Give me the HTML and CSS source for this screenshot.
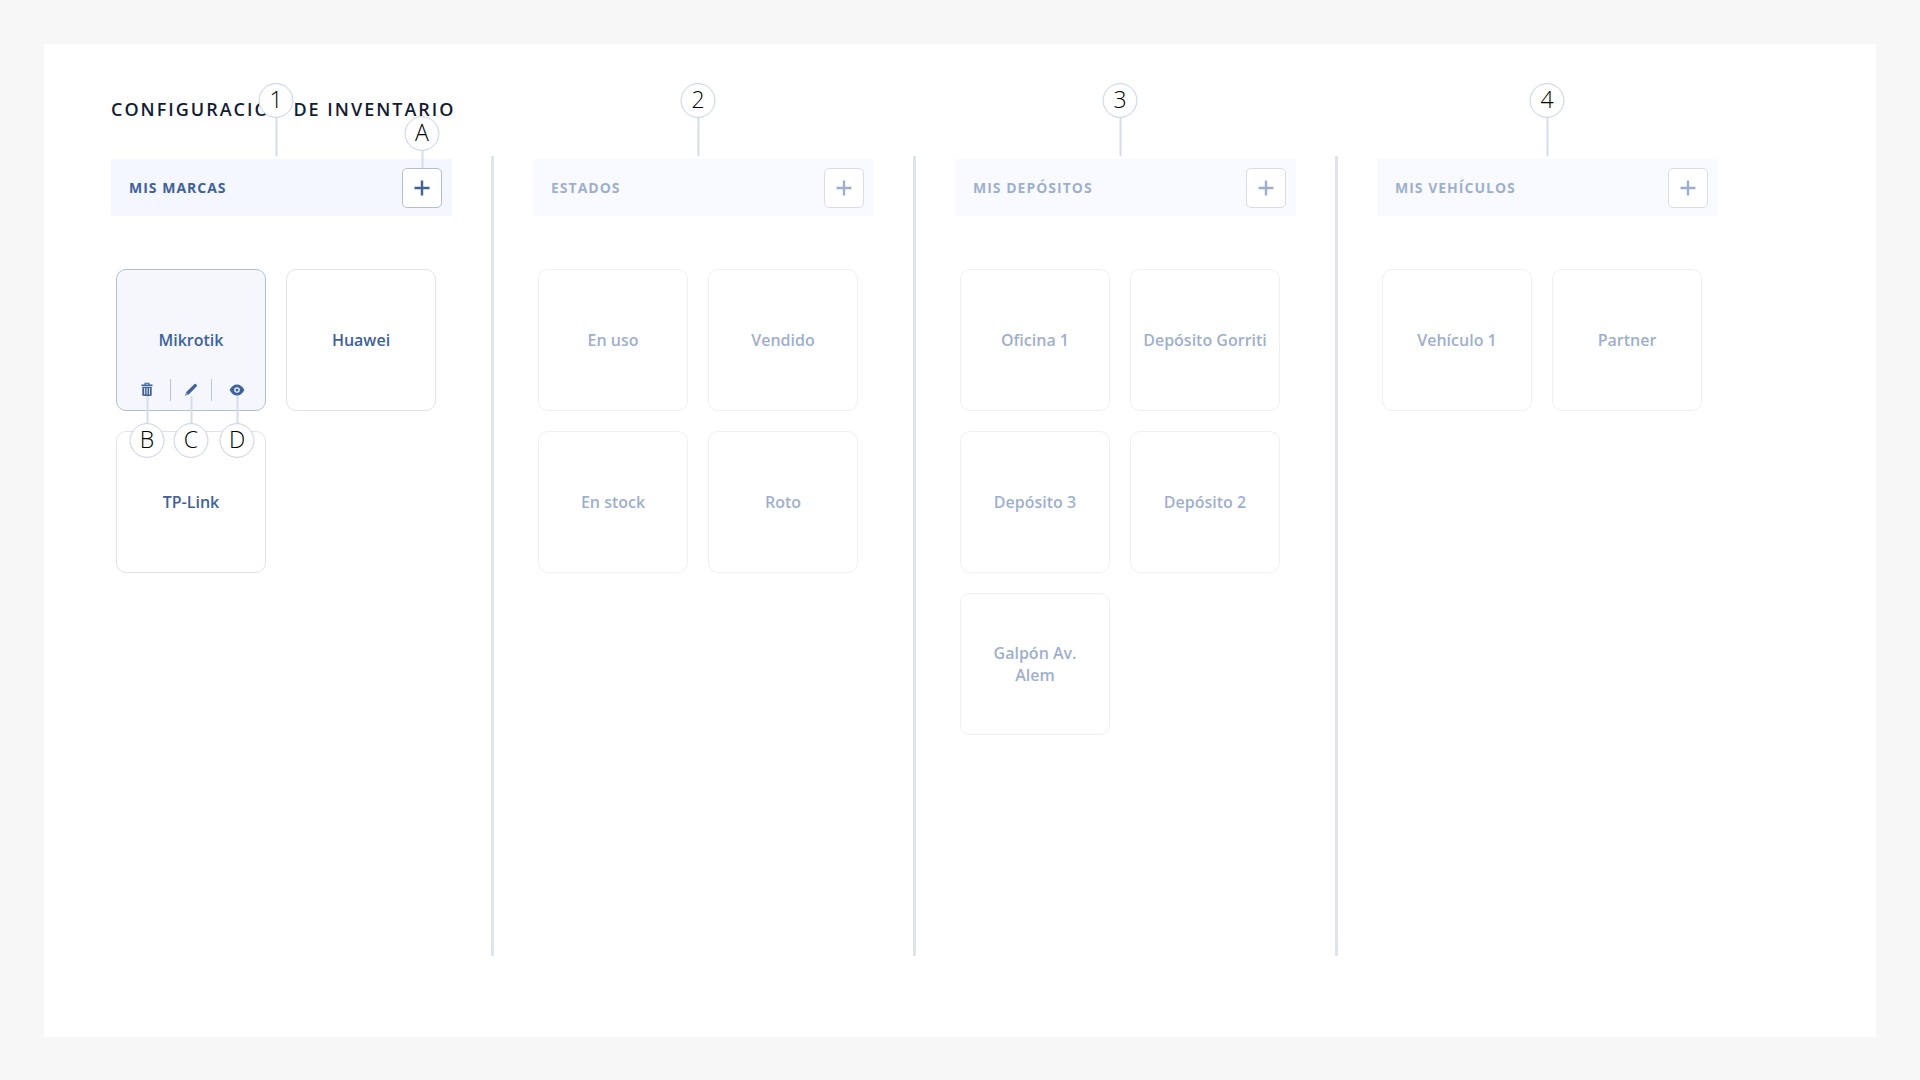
FILE: index.html
```html
<!DOCTYPE html>
<html lang="es">
<head>
    <meta charset="UTF-8">
    <meta name="viewport" content="width=device-width, initial-scale=1.0">
    <title>Configuración de inventario</title>
    <link rel="stylesheet" href="styles.css">
</head>
<body>
    <main class="panel">
        <h1>CONFIGURACIÓN DE INVENTARIO</h1>
        <div class="columns">
            <section class="column active">
                <span class="pin pin-column">1</span>
                <header class="column-header">
                    <h2>MIS MARCAS</h2>
                    <button class="add-btn">
                        <svg viewBox="0 0 16 16"><path d="M8 0.5v15M0.5 8h15"/></svg>
                        <span class="pin pin-add">A</span>
                    </button>
                </header>
                <div class="cards">
                    <div class="card selected">
                        <span class="card-name">Mikrotik</span>
                        <div class="actions">
                            <button>
                                <svg viewBox="0 0 16 16">
                                    <path d="M2.5 2.5h11v1.8h-11zM5.5 2.5V.8h5v1.7H9.3v-.7H6.7v.7z"/>
                                    <path fill-rule="evenodd" d="M3.3 4.9h9.4v7.8q0 1.3-1.3 1.3H4.6q-1.3 0-1.3-1.3zM5.2 6.1v6.3h.9V6.1zM7.6 6.1v6.3h.9V6.1zM10 6.1v6.3h.9V6.1z"/>
                                </svg>
                                <span class="pin pin-action">B</span>
                            </button>
                            <button>
                                <svg viewBox="0 0 16 16">
                                    <path fill-rule="evenodd" d="M11.3 2.2q1-.9 2.1.2 1.1 1.1.2 2.1L6 12.2 1.9 13.8l1.6-4.1zM3.8 11.1l-.7 1.6 1.6-.7z"/>
                                </svg>
                                <span class="pin pin-action">C</span>
                            </button>
                            <button>
                                <svg viewBox="0 0 16 16">
                                    <path fill-rule="evenodd" d="M.6 8Q3.5 2.5 8 2.5T15.4 8Q12.5 13.5 8 13.5T.6 8zM8 5.2a2.8 2.8 0 1 0 0 5.6 2.8 2.8 0 0 0 0-5.6zM8 6.5a1.5 1.5 0 1 1 0 3 1.5 1.5 0 0 1 0-3z"/>
                                </svg>
                                <span class="pin pin-action">D</span>
                            </button>
                        </div>
                    </div>
                    <div class="card"><span class="card-name">Huawei</span></div>
                    <div class="card"><span class="card-name">TP-Link</span></div>
                </div>
            </section>

            <section class="column">
                <span class="pin pin-column">2</span>
                <header class="column-header">
                    <h2>ESTADOS</h2>
                    <button class="add-btn">
                        <svg viewBox="0 0 16 16"><path d="M8 0.5v15M0.5 8h15"/></svg>
                    </button>
                </header>
                <div class="cards">
                    <div class="card"><span class="card-name">En uso</span></div>
                    <div class="card"><span class="card-name">Vendido</span></div>
                    <div class="card"><span class="card-name">En stock</span></div>
                    <div class="card"><span class="card-name">Roto</span></div>
                </div>
            </section>

            <section class="column">
                <span class="pin pin-column">3</span>
                <header class="column-header">
                    <h2>MIS DEPÓSITOS</h2>
                    <button class="add-btn">
                        <svg viewBox="0 0 16 16"><path d="M8 0.5v15M0.5 8h15"/></svg>
                    </button>
                </header>
                <div class="cards">
                    <div class="card"><span class="card-name">Oficina 1</span></div>
                    <div class="card"><span class="card-name">Depósito Gorriti</span></div>
                    <div class="card"><span class="card-name">Depósito 3</span></div>
                    <div class="card"><span class="card-name">Depósito 2</span></div>
                    <div class="card"><span class="card-name">Galpón Av. Alem</span></div>
                </div>
            </section>

            <section class="column">
                <span class="pin pin-column">4</span>
                <header class="column-header">
                    <h2>MIS VEHÍCULOS</h2>
                    <button class="add-btn">
                        <svg viewBox="0 0 16 16"><path d="M8 0.5v15M0.5 8h15"/></svg>
                    </button>
                </header>
                <div class="cards">
                    <div class="card"><span class="card-name">Vehículo 1</span></div>
                    <div class="card"><span class="card-name">Partner</span></div>
                </div>
            </section>
        </div>
    </main>
</body>
</html>
```

FILE: styles.css
```css
* {
    box-sizing: border-box;
}

body {
    margin: 0;
    padding: 44px 44px 43px;
    background-color: #f7f7f7;
    font-family: "Open Sans", sans-serif;
    color: #3f6299;
}

button {
    padding: 0;
    border: none;
    background: none;
    font-family: inherit;
    color: inherit;
    cursor: pointer;
}

.panel {
    min-height: calc(100vh - 87px);
    padding: 53px 77px 81px 67px;
    background-color: #fff;
}

h1 {
    margin: 0 0 35px;
    font-size: 18px;
    line-height: 24px;
    font-weight: 650;
    letter-spacing: 2px;
    color: #131c33;
}

.columns {
    display: grid;
    grid-template-columns: repeat(4, 1fr);
}

.column {
    position: relative;
    min-height: calc(100vh - 280px);
    margin-right: 39px;
    padding: 3px 39px 0 0;
    border-right: 3px solid #dfe3ee;
}

.column:last-child {
    border-color: transparent;
}

.column-header {
    display: flex;
    align-items: center;
    justify-content: space-between;
    height: 57px;
    padding: 0 10px 0 18px;
    background-color: #f4f7ff;
}

h2 {
    margin: 0;
    font-size: 14px;
    line-height: 20px;
    font-weight: 700;
    letter-spacing: 1px;
}

.add-btn {
    position: relative;
    display: flex;
    align-items: center;
    justify-content: center;
    width: 40px;
    height: 40px;
    border: 1px solid #b4bdd2;
    border-radius: 5px;
    background-color: #fff;
}

.add-btn svg {
    width: 16px;
    height: 16px;
    fill: none;
    stroke: currentColor;
    stroke-width: 2.4;
}

.cards {
    display: grid;
    grid-template-columns: 1fr 1fr;
    gap: 20px;
    padding: 53px 16px 0 5px;
}

.card {
    display: grid;
    height: 142px;
    border: 1px solid #dfe3ec;
    border-radius: 10px;
}

.card-name {
    grid-area: 1 / 1;
    place-self: center;
    padding: 0 12px;
    font-size: 16px;
    line-height: 22px;
    font-weight: 600;
    text-align: center;
}

.card.selected {
    border-color: #b4bdd2;
    background-color: #f5f7fd;
}

/* Columns that are not in use are dimmed */
.column:not(.active) .column-header,
.column:not(.active) .cards {
    opacity: 0.5;
}

.actions {
    grid-area: 1 / 1;
    align-self: end;
    display: grid;
    grid-template-columns: 46px 41px 1fr;
    padding: 0 3px 9px 7px;
}

.actions button {
    position: relative;
    display: flex;
    align-items: center;
    justify-content: center;
    height: 22px;
}

.actions button + button {
    border-left: 1px solid #bcc6da;
}

.actions svg {
    width: 16px;
    height: 16px;
    fill: currentColor;
}

/* Numbered callouts */
.pin {
    position: absolute;
    z-index: 2;
    left: 50%;
    width: 35px;
    height: 35px;
    border: 1px solid #cdd5e7;
    border-radius: 50%;
    background-color: #fff;
    box-shadow: inset 0 0 1px #c3cce0;
    color: #000;
    font-size: 23px;
    line-height: 31px;
    font-weight: 360;
    text-align: center;
    transform: translateX(-50%);
}

.pin::after {
    content: "";
    position: absolute;
    left: calc(50% - 1px);
    width: 2px;
    background-color: #d6dceb;
}

.pin-column {
    top: -73px;
    left: 165px;
}

.column:last-child .pin-column {
    left: 170px;
}

.pin-column::after {
    top: 34px;
    height: 38px;
}

.pin-add {
    top: -53px;
}

.pin-add::after {
    top: 34px;
    height: 17px;
}

.pin-action {
    top: 44px;
}

.pin-action::after {
    bottom: 34px;
    height: 27px;
}
```
